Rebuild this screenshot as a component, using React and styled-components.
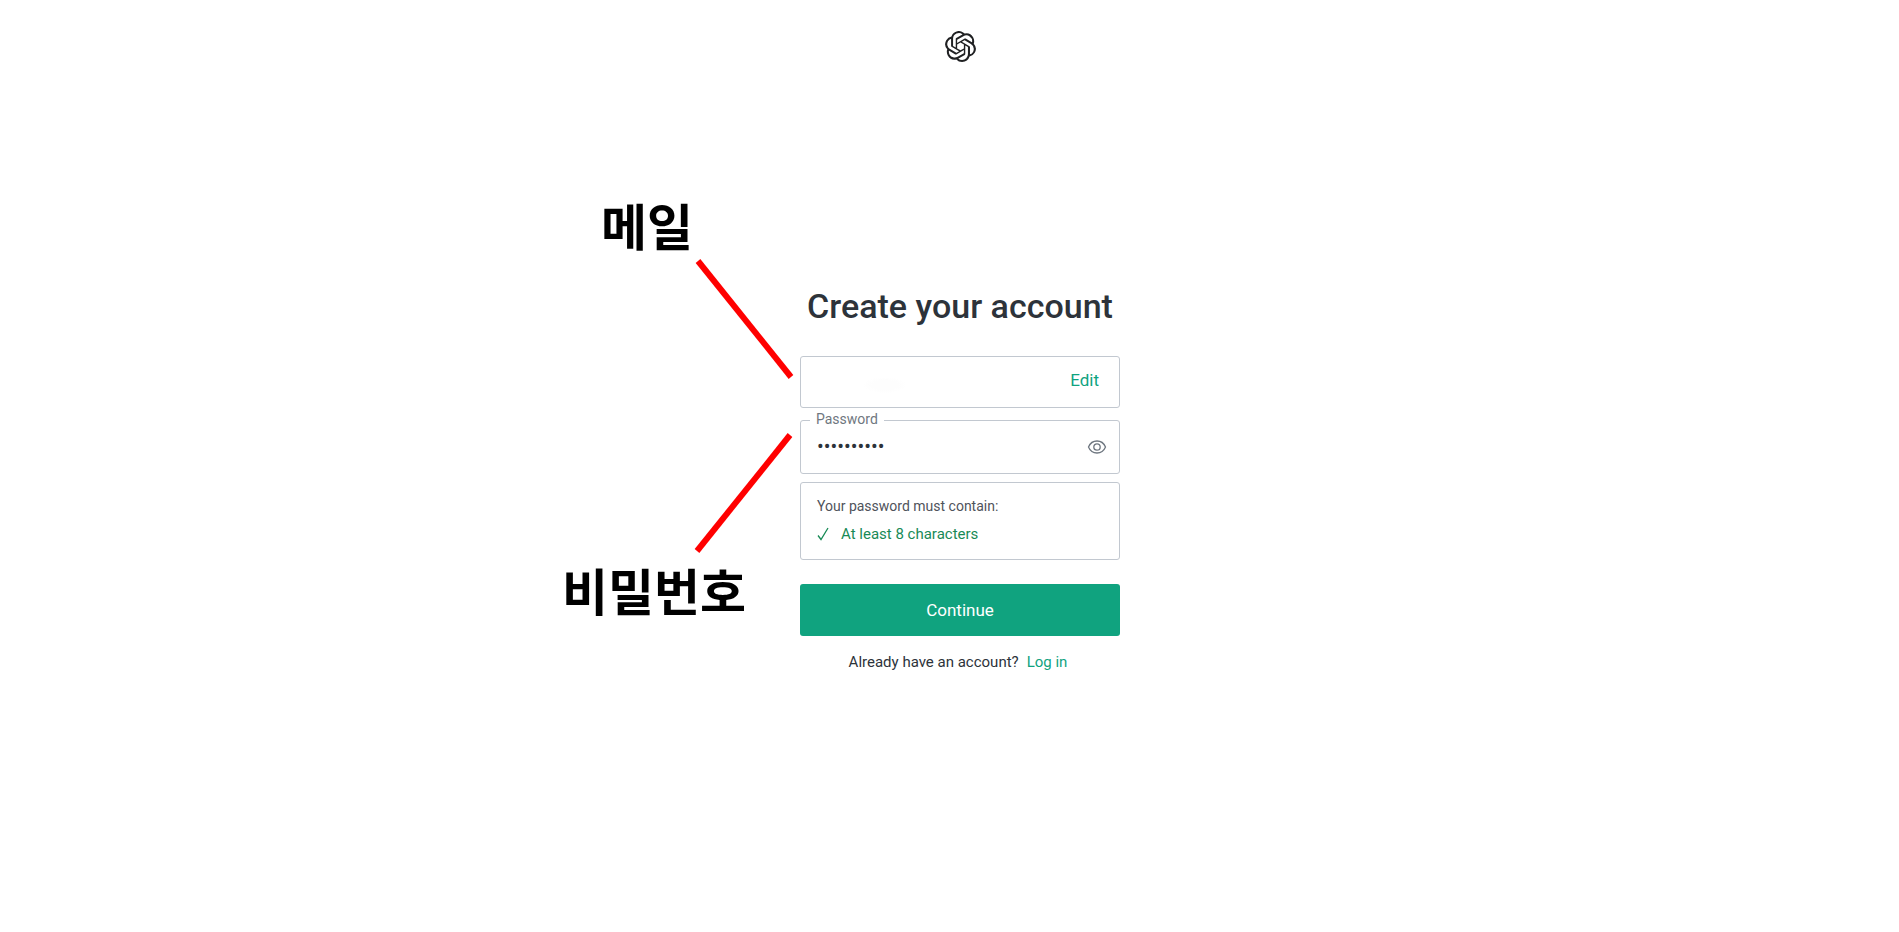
import React, { useState } from "react";
import styled, { createGlobalStyle } from "styled-components";
import { SiOpenai } from "react-icons/si";

const GlobalStyle = createGlobalStyle`
  * {
    box-sizing: border-box;
  }

  body {
    margin: 0;
    background: #fff;
    color: #2d333a;
    font-family: Roboto, "Noto Sans CJK KR", sans-serif;
  }
`;

function App() {
  const [password, setPassword] = useState("abcd123456");
  const [visible, setVisible] = useState(false);

  return (
    <Page>
      <GlobalStyle />
      <Header>
        <SiOpenai size={31} aria-label="OpenAI" />
      </Header>
      <Main>
        <Title>Create your account</Title>
        <Form onSubmit={(e) => e.preventDefault()}>
          <Field>
            <EmailInput type="email" aria-label="Email address" readOnly />
            <EditLink href="#edit">Edit</EditLink>
          </Field>
          <Field $tall>
            <FloatingLabel htmlFor="password">Password</FloatingLabel>
            <PasswordInput
              id="password"
              type={visible ? "text" : "password"}
              value={password}
              onChange={(e) => setPassword(e.target.value)}
            />
            <EyeButton
              type="button"
              aria-label="Show password"
              onClick={() => setVisible(!visible)}
            >
              <svg width="20" height="16" viewBox="0 0 20 16" fill="none" stroke="currentColor" strokeWidth="1.3">
                <path d="M1.5 8C3 4.4 6.2 2 10 2s7 2.4 8.5 6c-1.5 3.6-4.7 6-8.5 6S3 11.6 1.5 8Z" />
                <circle cx="10" cy="8" r="3.2" />
              </svg>
            </EyeButton>
          </Field>
          <Rules>
            <p>Your password must contain:</p>
            <Passed>
              <svg width="12" height="14" viewBox="0 0 12 14" fill="none" stroke="currentColor" strokeWidth="1.3">
                <path d="M1 8.5 4 12.5 11 1" />
              </svg>
              At least 8 characters
            </Passed>
          </Rules>
          <Submit type="submit">Continue</Submit>
        </Form>
        <Footer>
          Already have an account?
          <GreenLink href="#login">Log in</GreenLink>
        </Footer>

        {/* notes pointing at the two fields */}
        <Note $top={-94} $right={427}>메일</Note>
        <Note $top={271} $right={374}>비밀번호</Note>
        <Pointers width="100" height="300" viewBox="0 0 100 300" stroke="#f00" strokeWidth="6">
          <path d="M4 5 97 121" />
          <path d="M96 179 3 295" />
        </Pointers>
      </Main>
    </Page>
  );
}

export default App;

const Page = styled.div`
  display: flex;
  flex-direction: column;
  align-items: center;
  padding: 30px 0 30px 21px;
`;

const Header = styled.header`
  display: flex;
  align-items: center;
  height: 32px;
  color: #202123;
`;

const Main = styled.main`
  position: relative;
  width: 320px;
  margin-top: 224px;
`;

const Title = styled.h1`
  margin: 0 0 30px;
  font-size: 34px;
  font-weight: 500;
  line-height: 40px;
  text-align: center;
  white-space: nowrap;
`;

const Form = styled.form`
  display: flex;
  flex-direction: column;
`;

const Field = styled.div`
  position: relative;
  display: flex;
  align-items: center;
  height: ${(p) => (p.$tall ? "54px" : "52px")};
  margin-bottom: ${(p) => (p.$tall ? "8px" : "12px")};
  border: 1px solid #c2c8d0;
  border-radius: 3px;
`;

const TextInput = styled.input`
  flex: 1;
  min-width: 0;
  height: 100%;
  padding: 0 16px;
  border: 0;
  outline: 0;
  background: transparent;
  color: #2d333a;
  font-family: inherit;
  font-size: 20px;
`;

const EmailInput = styled(TextInput)`
  background: radial-gradient(22px 8px at 84px 28px, #fdfdfd 60%, transparent);
`;

const PasswordInput = styled(TextInput)`
  padding-bottom: 2px;
`;

const FloatingLabel = styled.label`
  position: absolute;
  top: -12px;
  left: 9px;
  padding: 0 6px;
  background: #fff;
  color: #6f7780;
  font-size: 14px;
  line-height: 20px;
`;

const GreenLink = styled.a`
  margin-left: 8px;
  color: #10a37f;
  text-decoration: none;
`;

const EditLink = styled(GreenLink)`
  padding: 0 20px 4px 0;
  font-size: 17px;
`;

const EyeButton = styled.button`
  display: flex;
  margin-right: 12px;
  padding: 0;
  border: 0;
  background: none;
  color: #6f7780;
  cursor: pointer;
`;

const Rules = styled.div`
  margin-bottom: 24px;
  padding: 9px 16px 11px;
  border: 1px solid #c2c8d0;
  border-radius: 3px;
  color: #4f535b;
  font-size: 14px;
  line-height: 28px;

  p {
    margin: 0;
  }
`;

const Passed = styled.div`
  display: flex;
  align-items: center;
  gap: 12px;
  color: #188a56;
  font-size: 15px;
`;

const Submit = styled.button`
  height: 52px;
  border: 0;
  border-radius: 3px;
  background: #10a37f;
  color: #fff;
  font-family: inherit;
  font-size: 17px;
  cursor: pointer;
`;

const Footer = styled.p`
  margin: 16px 0 0;
  padding-right: 4px;
  font-size: 15px;
  line-height: 20px;
  text-align: center;
`;

const Note = styled.span`
  position: absolute;
  top: ${(p) => p.$top}px;
  right: ${(p) => p.$right}px;
  color: #000;
  font-family: "Noto Sans CJK KR", sans-serif;
  font-size: 50px;
  font-weight: 700;
  line-height: 64px;
  white-space: nowrap;
`;

const Pointers = styled.svg`
  position: absolute;
  top: -30px;
  right: 326px;
`;
